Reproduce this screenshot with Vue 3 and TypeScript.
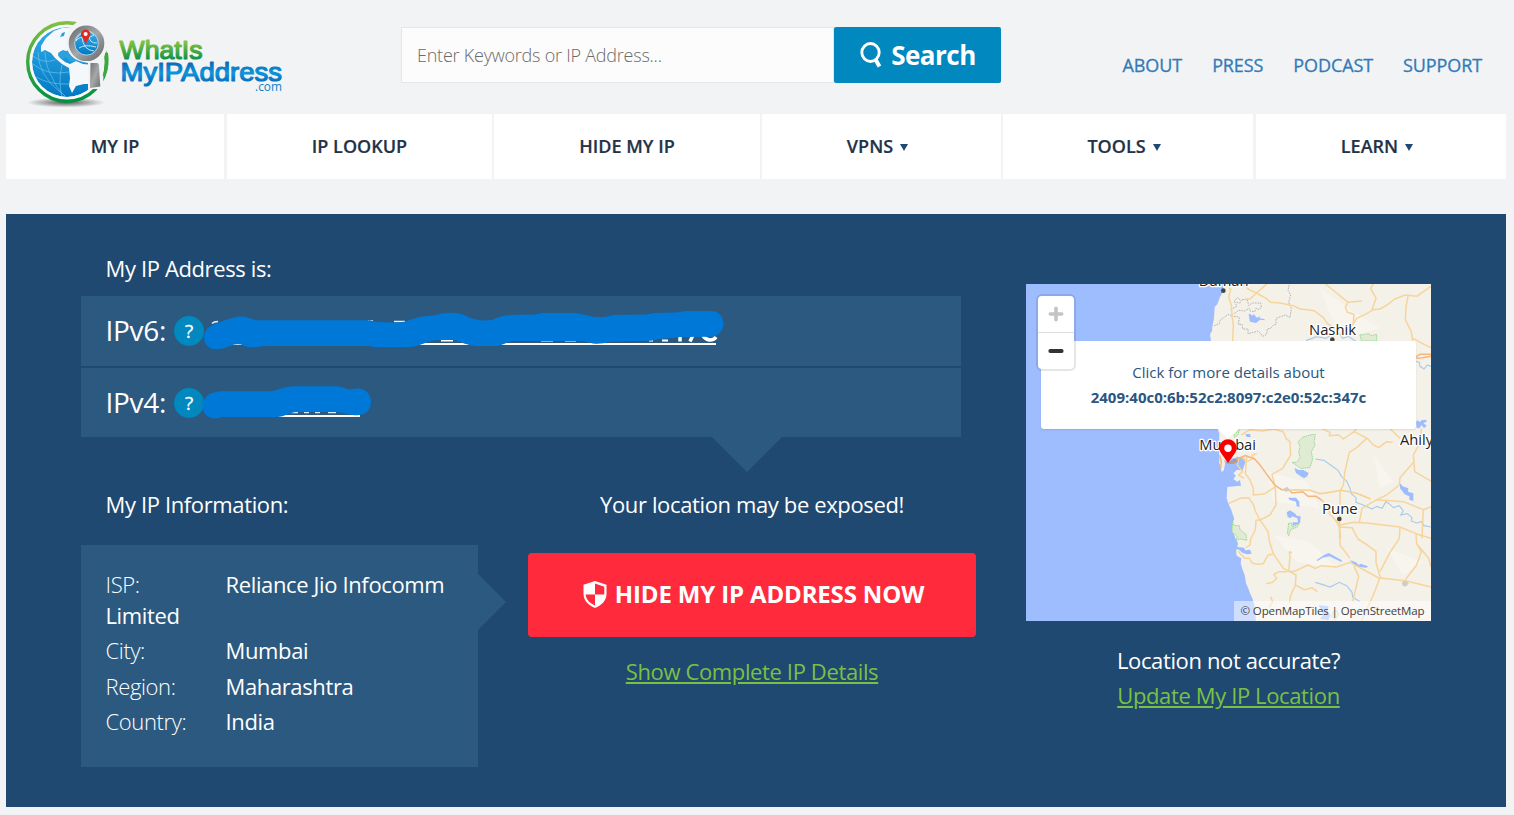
<script setup lang="ts">
const topLinks: string[] = ['ABOUT', 'PRESS', 'PODCAST', 'SUPPORT']

interface NavItem { label: string; menu: boolean; size: string }
const navItems: NavItem[] = [
  { label: 'MY IP', menu: false, size: 'n1' },
  { label: 'IP LOOKUP', menu: false, size: 'n2' },
  { label: 'HIDE MY IP', menu: false, size: 'n3' },
  { label: 'VPNS', menu: true, size: 'n4' },
  { label: 'TOOLS', menu: true, size: 'n5' },
  { label: 'LEARN', menu: true, size: 'n6' },
]

const info = [
  { label: 'ISP:', value: 'Reliance Jio Infocomm Limited' },
  { label: 'City:', value: 'Mumbai' },
  { label: 'Region:', value: 'Maharashtra' },
  { label: 'Country:', value: 'India' },
]
</script>

<template>
  <div class="page">
    <header class="header">
      <svg class="logo" viewBox="0 0 300 114" width="300" height="114">
        <defs>
          <linearGradient id="ring" x1="0" y1="0" x2="0" y2="1">
            <stop offset="0" stop-color="#7fbf3f" /><stop offset=".5" stop-color="#3fa640" /><stop offset="1" stop-color="#00923f" />
          </linearGradient>
          <linearGradient id="sea" x1="0" y1="0" x2="0" y2="1">
            <stop offset="0" stop-color="#35aee8" /><stop offset="1" stop-color="#0079c4" />
          </linearGradient>
          <linearGradient id="steel" x1="0" y1="0" x2="1" y2="1">
            <stop offset="0" stop-color="#707275" /><stop offset=".5" stop-color="#a5a7a9" /><stop offset="1" stop-color="#6d6f72" />
          </linearGradient>
          <linearGradient id="tgreen" x1="0" y1="0" x2="0" y2="1">
            <stop offset=".25" stop-color="#7fc241" /><stop offset=".8" stop-color="#159347" />
          </linearGradient>
          <linearGradient id="tblue" x1="0" y1="0" x2="0" y2="1">
            <stop offset=".2" stop-color="#0b68b3" /><stop offset=".55" stop-color="#0c95db" /><stop offset=".8" stop-color="#0873c0" />
          </linearGradient>
          <radialGradient id="shade"><stop offset="0" stop-color="#333" stop-opacity=".8" /><stop offset="1" stop-color="#333" stop-opacity="0" /></radialGradient>
          <clipPath id="globe"><circle cx="67" cy="62" r="35" /></clipPath>
        </defs>
        <ellipse cx="66" cy="102.500" rx="39" ry="5" fill="url(#shade)" />
        <circle cx="67" cy="62" r="40" fill="#f7f9fb" />
        <circle cx="67" cy="62" r="39.300" fill="none" stroke="url(#ring)" stroke-width="3.400" />
        <g clip-path="url(#globe)">
          <circle cx="67" cy="62" r="35" fill="url(#sea)" />
          <path d="M41 46 46 38 54 31 62 28 72 27 71 44 67 51 61 51 58 55 60 58 65 62 70 64 76 61 83 64 104 66 104 84 84 84 76 86 72 93 69 86 70 78 69 68 62 64 55 58 51 53 45 50 41 52Z" fill="#f4f8fb" />
          <path d="M62 33 65 32 64 36 60 37Z M58 53 63 50 66 51 70 56 80 60 84 63 76 61 70 62 66 57 63 59 59 57Z" fill="#2ba2df" />
          <path d="M38 52Q38 75 61 93M45 52Q46 68 52 77Q56 88 65 96M62 65Q58 81 62 97M33 64Q47 76 69 72M36 77Q50 85 69 84M33 56Q43 64 55 60" fill="none" stroke="#7cc9ef" stroke-width=".6" />
        </g>
        <path d="M77 22Q95 19 104.500 33 110 45 104 57L103 89H88V63Q66 60 66 42 67 28 77 22Z" fill="#f1f3f5" />
        <path d="M106.500 53Q108.500 65 104 76" fill="none" stroke="#3fa640" stroke-width="3" />
        <circle cx="86.500" cy="43.300" r="14.800" fill="#52b9ea" stroke="url(#steel)" stroke-width="6" />
        <circle cx="86.500" cy="43.300" r="11.800" fill="url(#sea)" stroke="#d5dde2" stroke-width=".8" />
        <path d="M76 41Q80 35 86 39L94 35Q91 30 86 32Q78 33 76 41M79 48Q85 44 96 47M82 37Q83 50 94 51M88 33Q89 44 97 43" fill="none" stroke="#c3e5f6" stroke-width="1" />
        <path d="M90.500 63H97Q98.800 63 99 66L100.300 86.500 90 88Z" fill="url(#steel)" />
        <path d="M86 43.500 82 37A4.600 4.600 0 1 1 89.300 37Z" fill="#e5281f" /><circle cx="85.600" cy="34" r="2" fill="#fff" />
        <g class="logo-text">
          <text x="119.500" y="58.500" textLength="83" lengthAdjust="spacingAndGlyphs" font-size="26" fill="url(#tgreen)" stroke="url(#tgreen)">WhatIs</text>
          <text x="120.500" y="80.500" textLength="161.500" lengthAdjust="spacingAndGlyphs" font-size="26" fill="url(#tblue)" stroke="url(#tblue)">MyIPAddress</text>
        </g>
        <text class="logo-com" x="255" y="91" textLength="27" lengthAdjust="spacingAndGlyphs" font-size="12" fill="#1183c6">.com</text>
      </svg>
      <form class="search" @submit.prevent>
        <input class="field" type="text" placeholder="Enter Keywords or IP Address..." />
        <button class="search-btn">
          <svg width="23" height="26" viewBox="0 0 23 26"><ellipse cx="10.500" cy="10.500" rx="8.700" ry="9" fill="none" stroke="#fff" stroke-width="2.900" /><path d="M15.500 17.500 19.500 24.500" stroke="#fff" stroke-width="4" /></svg>
          <span>Search</span>
        </button>
      </form>
      <div class="top-links"><a v-for="l in topLinks" :key="l">{{ l }}</a></div>
    </header>

    <nav class="nav">
      <a v-for="n in navItems" :key="n.label" :class="['nav-item', n.size]">
        <span>{{ n.label }}</span><i v-if="n.menu" class="caret"></i>
      </a>
    </nav>

    <main class="panel">
      <section class="left">
        <h2 class="heading ip-heading">My IP Address is:</h2>
        <div class="ips">
          <div class="ip-row v6">
            <span class="ip-label">IPv6:</span><span class="help">?</span>
            <svg class="scribble" viewBox="200 305 530 50" width="530" height="50">
              <path d="M212 323.500Q214 321.500 218 321.500M250 322H254M368 321H373M394 321.500H405" stroke="#e9f2fb" stroke-width="1.500" fill="none" />
              <path d="M225 344H716" stroke="#fff" stroke-width="2" />
              <path d="M441 340.500H453M541 340.500H553M565 340.500H576M649 340.500H653M662 340.500H668" stroke="#fff" stroke-width="2" />
              <path d="M680 336V341.500M693 335 690 341.500M703 336Q706 340 710 340T716 337" stroke="#fff" stroke-width="3.500" fill="none" />
              <path d="M204 337C204 328 213 324 222 321.500Q240 314 249 318 254 320.300 260 320.300H370Q374 322 379 322 397 323 406 321.500C412 319 417 317.500 423 316.500L436 315C446 312 458 312 465 315.500Q478 322 492 320 502 315 511 315L535 314.500 543 313H576L595 317H605L613 315 646 314.500 655 313 677 312.500C682 311.500 685 311 689 311H711C719 311 723 317 723.500 323.500 723.500 331 718 336.500 711 336.700L681 337 660 339 651 340.700 611 341.700Q600 344.500 593 343.500L583 341H513C507 342 502 346 494 346H478C466 346 461 341 453 340H436C425 342 417 347.300 407 347.300H375L369 346H264C256 347.500 248 348.500 241 344.500Q234 343.500 230 346C211 354 204 346 204 337Z" fill="#0078d7" />
            </svg>
          </div>
          <div class="ip-row v4">
            <span class="ip-label">IPv4:</span><span class="help">?</span>
            <svg class="scribble" viewBox="200 377 530 50" width="530" height="50">
              <path d="M272 416H360" stroke="#fff" stroke-width="2" />
              <path d="M291 412.500H298M304 412.500H309M315 412.500H320M328 412.500H336" stroke="#d8e9fb" stroke-width="1.500" />
              <path d="M202.500 406C202.500 396 212 391.300 222 391.300H272C280 389 286 386.300 295 386.200H337C343 387 347 390 352 389.300 366 386 371 395 371 402.300 371 410 365 415.300 357 415.300 349 415.300 343 412.500 336 412H295C289 413 284 416.500 278 417H222C212 421 202.500 416 202.500 406Z" fill="#0078d7" />
            </svg>
          </div>
        </div>
        <div class="lower">
          <div class="info">
            <h2 class="heading">My IP Information:</h2>
            <div class="info-box">
              <p v-for="r in info" :key="r.label"><span class="key">{{ r.label }}</span><span class="val">{{ r.value }}</span></p>
            </div>
          </div>
          <div class="cta">
            <h2 class="heading exposed">Your location may be exposed!</h2>
            <button class="hide-btn">
              <svg width="24" height="28" viewBox="0 0 24 28"><path d="M12 0 23.500 3.800V13C23.500 20 18 24.500 12 27C6 24.500.5 20 .5 13V3.800Z" fill="#fff" /><path d="M12 2.600 21.300 5.700V13.600H12ZM2.700 13.600H12V24.500C7 22.300 3.200 19 2.700 13.600Z" fill="#ff2a3b" /></svg>
              <span>HIDE MY IP ADDRESS NOW</span>
            </button>
            <a class="green">Show Complete IP Details</a>
          </div>
        </div>
      </section>

      <aside class="right">
        <div class="map">
          <svg class="tiles" width="405" height="337" viewBox="18 27 1215 1011">
            <rect x="18" y="27" width="1215" height="1011" fill="#f4f1e9" />
            <g fill="#faf8f3" opacity=".6"><path d="M900 40 1000 110 1080 160 960 190ZM740 590 860 620 900 700 760 680ZM760 780 870 800 950 880 830 860ZM1060 540 1120 620 1080 640ZM1100 820 1210 860 1150 900Z" /></g>
            <path d="M18 27H612L608 52 600 66 592 88 584 96 582 130 578 150 576 168 570 178 573 198 582 280 570 370 592 461 598 475 597 540 601 570 605 592 612 585 614 560 626 560 640 552 652 545 672 548 676 562 668 585 650 585 640 595 648 602 640 612 652 620 660 615 663 632 644 634 622 636 620 670 627 690 634 705 643 732 638 742 636 760 646 790 654 805 652 816 672 818 676 826 690 824 695 836 682 838 668 834 654 822 648 826 650 842 664 850 662 865 668 885 674 900 678 925 684 938 690 955 697 970 703 990 708 1038H18Z" fill="#9ebdff" />
            <path d="M597 565 601 545 612 540 618 552 612 580Z" fill="#f4efe6" />
            <g fill="#9ebdff">
              <path d="M686 118 692 116 694 122 702 118 710 128 722 124 718 130 732 132 736 136 720 134 708 144 690 140 688 132Z" />
              <path d="M1188 440 1194 436 1200 442 1204 436 1218 434 1220 440 1210 444 1220 452 1212 460 1205 450 1198 460 1190 458Z" />
              <path d="M823 579 836 585 850 585 866 594 862 604 852 610 842 604 828 594ZM805 668 828 668 838 680 838 696 830 694 828 680 808 674ZM800 712 810 706 826 716 830 722 842 724 840 745 818 752 818 742 834 742 832 730 816 724 812 730 803 726ZM1140 625 1148 634 1165 640 1164 650 1180 655 1180 678 1168 674 1168 664 1154 658 1140 640ZM890 855 912 840 926 834 966 856 964 861 928 844 908 848 892 858ZM990 855 1008 862 1016 870 1022 866 1044 874 1040 878 1018 876 1004 872ZM896 990 926 994 922 1012 932 1020 925 1036 900 1032 910 1018Z" />
              <path d="M676 478 690 476 692 486 680 486Z" />
            </g>
            <g fill="#dfebd3" stroke="#8ad78a" stroke-width="2.500" stroke-dasharray="5 2">
              <path d="M1020 180 1048 176 1052 182 1070 178 1070 198H1024Z" />
              <path d="M850 486 870 480 886 478 882 502 886 510 874 530 878 552 870 578 842 580 816 562 830 562 840 548 836 532 840 514 834 500Z" />
              <path d="M638 740 642 752 658 752 660 764 678 778 680 796 662 792 648 796 652 784 636 772ZM806 745 814 744 818 756 836 746 832 756 812 764 806 782 802 776Z" />
              <path d="M642 480 658 464 654 480 644 488ZM940 1010 950 1005 956 1020 944 1034 934 1024Z" />
            </g>
            <g fill="none" stroke="#b5b5b5" stroke-width="3" stroke-dasharray="5 3">
              <path d="M582 152 598 146 600 136 624 118 632 120 634 126 650 124 658 128 655 148 666 148 668 162 684 162 684 176 708 170 714 168 722 176 728 184 740 178 742 162 752 160 758 152 768 148 768 130 796 120 810 128 814 100 806 82 812 60 804 46 808 27" />
              <path d="M632 104 650 94 643 78 652 68 664 76 660 84 648 82M666 74 682 74 686 92 696 84 722 84 724 96 718 104 708 100 704 110 690 108 688 100 674 108 656 106 640 118" />
            </g>
            <g fill="none" stroke="#a9cbea" stroke-width="3.500">
              <path d="M858 197 890 185 918 190 936 178 960 178 968 190 985 184 1010 200" />
              <path d="M886 552 912 556 940 576 954 586 964 604 980 618 990 640 994 656 1008 668 1008 682 1030 690 1056 702 1070 694 1086 700 1098 680 1110 688 1120 698 1138 692 1150 708 1142 720 1162 716 1176 728 1174 738 1190 744 1204 740 1212 752 1233 756M886 922 906 928 930 936 958 922 980 932 996 952 998 966 1020 980M1180 256 1198 262 1200 274 1212 282 1222 270 1233 274" />
            </g>
            <g fill="none" stroke="#f7d49b" stroke-width="4.500" stroke-linejoin="round">
              <path d="M664 27 680 36 686 44 710 54 738 70 752 82 780 84 820 92 840 102 864 104 884 108 910 128 922 146 944 160 958 178 980 164 1000 146 1010 130 1040 116 1060 104 1080 102 1104 88 1124 72 1156 60 1190 64 1233 34" />
              <path d="M710 54 690 72 674 72M740 27 710 54M622 27 632 44 626 66 634 90 636 120 640 150 638 198M916 27 950 54 984 82 976 96 982 112 1002 118 1000 146M984 82 1026 78M1060 27 1052 40 1068 70 1056 104M1164 64 1158 96 1156 134 1174 170 1178 198M1180 190 1212 208 1233 218" />
              <path d="M664 480 690 464 728 468 760 462 790 470 798 490 810 500 812 540 788 580 756 598 766 638M905 461 930 472 928 482 956 480 970 492 1002 470 1010 461M1002 470 1042 490 1060 510 1076 518 1100 500 1118 502M1110 461 1140 490M1040 490 1010 518 988 532 974 594 970 630 960 650 960 728 958 750 962 790" />
              <path d="M1204 461 1202 500 1180 540 1182 560 1140 608 1138 630 1100 660 1070 674 1026 700 1018 742M1182 560 1184 590 1233 618M1070 674 1150 680 1210 704 1233 696M1210 704 1206 790" />
              <path d="M626 686 660 670 686 668 700 688 706 708 720 735 744 770 748 798 760 836 790 880 810 890 826 888 864 870 886 880 904 872 950 876 990 862 1012 874 1060 900 1074 908 1160 918 1233 936" />
              <path d="M680 545 676 595 690 615 700 640 700 660 735 656 768 634M720 735 750 720 768 690 766 638M664 545 680 560 700 550 696 540 710 536M656 550 652 570 668 590 656 600 672 610" />
              <path d="M720 735 708 736 706 765 692 792 690 810 678 818M654 828 674 850 688 850 696 864 712 868 730 866 744 840 758 838" />
              <path d="M802 890 776 890 762 898 770 910 758 922 738 926M816 834 808 830 810 846 806 888 828 900 826 932 812 960 808 985M826 930 852 944 876 938 892 950M752 965 758 980 748 998" />
              <path d="M926 715 946 735 962 750 1000 742 1040 744 1140 756 1188 776 1233 790M946 735 958 756 996 758 1014 792 1042 810 1068 830 1068 862 1080 904 1074 924 1060 960 1024 1038M958 756 960 810 990 850M1140 756 1138 790 1110 832 1080 890M1188 776 1190 806 1204 830 1190 870 1150 922M1190 806 1226 850 1233 876M1002 874 1016 904 998 980" />
            </g>
            <g fill="none" stroke="#f7b57d" stroke-width="4.500">
              <path d="M626 560 645 562 656 550 676 542 704 552 720 570 736 592 764 630 785 644 808 646 816 654 848 650 864 664 888 664 906 676" />
              <path d="M806 646 830 644 870 646 900 656 940 650 962 646 1008 654 1052 672M906 676 924 700 930 715" stroke="#f7cf91" />
              <path d="M599 540 604 558 602 580M1188 245 1200 238 1233 238M1188 250 1208 248 1233 244" />
            </g>
            <g stroke="#d0cdc9" fill="#d0cdc9"><path d="M1146 922 1152 918 1160 918 1166 926 1158 934 1148 932ZM790 642 802 636 810 646 798 650Z" /></g>
            <g fill="#444"><circle cx="610" cy="47" r="7" /><circle cx="937" cy="194" r="7" /><circle cx="958" cy="732" r="7" /></g>
            <g class="place">
              <text x="536" y="34" textLength="150" lengthAdjust="spacingAndGlyphs">Daman</text>
              <text x="867" y="179" textLength="141" lengthAdjust="spacingAndGlyphs">Nashik</text>
              <text x="538" y="524" textLength="170" lengthAdjust="spacingAndGlyphs">Mumbai</text>
              <text x="1140" y="511">Ahilya</text>
              <text x="906" y="716" textLength="107" lengthAdjust="spacingAndGlyphs">Pune</text>
            </g>
          </svg>
          <div class="popup"><span>Click for more details about</span><b>2409:40c0:6b:52c2:8097:c2e0:52c:347c</b></div>
          <svg class="pin" width="24" height="30" viewBox="0 0 24 30"><ellipse cx="15" cy="22" rx="7" ry="3" fill="#000" opacity=".15" /><path d="M12 24 5 14A8.700 8.700 0 1 1 19 14Z" fill="#f80000" /><circle cx="12" cy="9.300" r="3.700" fill="#fff" /></svg>
          <div class="zoom">
            <button><svg width="16" height="16" viewBox="0 0 16 16"><path d="M8 2.300V13.700M2.300 8H13.700" stroke="#c4c4c4" stroke-width="3.600" stroke-linecap="round" /></svg></button>
            <button><svg width="16" height="16" viewBox="0 0 16 16"><path d="M2.300 8H13.700" stroke="#333" stroke-width="3.800" stroke-linecap="round" /></svg></button>
          </div>
          <div class="credit">© OpenMapTiles | OpenStreetMap</div>
        </div>
        <p class="accurate">Location not accurate?</p>
        <a class="green">Update My IP Location</a>
      </aside>
    </main>
  </div>
</template>

<style>
html, body { margin: 0; background: #f1f3f5; overflow: hidden; }
</style>

<style scoped>
.page { width: 1514px; height: 815px; overflow: hidden; background: #f1f3f5; font-family: "Open Sans", "Noto Sans", sans-serif; color: #fff; box-sizing: border-box; }
.page * { box-sizing: border-box; }
.header { display: flex; height: 114px; align-items: flex-start; }
.logo { flex: none; margin-right: 101px; }
.logo-text { font-family: "Liberation Sans", Arial, sans-serif; font-weight: 400; stroke-width: 1.2px; stroke-linejoin: round; }
.logo-com { font-family: "Open Sans", sans-serif; }
.search { display: flex; margin-top: 27px; width: 600px; height: 56px; }
.field { flex: 1; min-width: 0; border: 1px solid #e4e6e7; background: #fcfcfc; padding: 0 15px; font: 300 18px "Open Sans", sans-serif; letter-spacing: -.23px; color: #777; outline: none; border-radius: 0; }
.field::placeholder { color: #6b6b6b; opacity: 1; }
.search-btn { width: 167px; border: 0; background: #0088bf; color: #fff; border-radius: 2px; display: flex; align-items: center; justify-content: center; gap: 8px; font: 700 26px "Open Sans", sans-serif; letter-spacing: -.5px; padding: 0 0 0 1px; }
.top-links { margin-left: auto; margin-right: 32px; display: flex; gap: 30px; padding-top: 53px; font-size: 18px; line-height: 24px; letter-spacing: -.1px; color: #337ab7; -webkit-text-stroke: .3px #337ab7; }
.nav { display: flex; gap: 2px; height: 65px; margin: 0 8px 0 6px; }
.nav-item { background: #fff; display: flex; align-items: center; justify-content: center; padding-bottom: 2px; font-weight: 600; font-size: 18px; color: #233247; -webkit-text-stroke: .2px #233247; flex: 0 0 auto; }
.n1 { width: 218px; margin-right: 1px; } .n2 { width: 265px; } .n3 { width: 266px; } .n4 { width: 239px; } .n5 { width: 250px; margin-right: 1px; } .n6 { width: 250px; }
.caret { border: 4px solid transparent; border-top: 7px solid #1f4971; border-bottom: 0; margin: 3px 8px 0 7px; }
.panel { margin: 35px 8px 0 6px; height: 593px; background: #1f4971; display: flex; padding: 0 75px; }
.left { width: 895px; }
.heading { margin: 0; font-weight: 400; font-size: 22px; line-height: 30px; padding-left: 24.500px; letter-spacing: -.37px; }
.ip-heading { padding-top: 39px; height: 82px; }
.ips { position: relative; width: 880px; display: flex; flex-direction: column; gap: 2px; }
.ips::after { content: ""; position: absolute; top: 141px; left: 631px; border: 35px solid transparent; border-top-color: #2c597f; border-bottom: 0; }
.ip-row { background: #2c597f; height: 70px; display: flex; align-items: center; position: relative; padding-left: 24.500px; }
.v4 { height: 69px; }
.ip-label { font-size: 28px; width: 68.500px; letter-spacing: -.3px; padding-bottom: 2px; }
.help { width: 30px; height: 30px; border-radius: 50%; background: #0088bf; text-align: center; font-size: 19px; line-height: 31px; font-weight: 400; -webkit-text-stroke: .3px #fff; }
.scribble { position: absolute; left: 119px; top: 9px; }
.lower { display: flex; gap: 50px; padding-top: 52px; }
.info { width: 397px; }
.info-box { position: relative; background: #2c597f; height: 222px; margin-top: 26px; padding: 24px 25px 0 24.500px; font-size: 22px; letter-spacing: -.37px; }
.info-box::after { content: ""; position: absolute; left: 397px; top: 29px; border: 28.500px solid transparent; border-left-color: #2c597f; border-right: 0; }
.info-box p { margin: 0 0 4.400px; line-height: 31px; }
.key { display: inline-block; width: 120px; font-weight: 300; }
.cta { width: 448px; text-align: center; }
.exposed { padding: 0; }
.hide-btn { width: 448px; height: 84px; margin: 34px 0 19px; border: 0; border-radius: 4px; background: #ff2a3b; color: #fff; display: flex; align-items: center; justify-content: center; gap: 8px; font: 700 24px "Open Sans", sans-serif; letter-spacing: -.15px; padding: 0 0 0 3px; }
.hide-btn span { padding-bottom: 3px; }
.green { color: #7ac143; text-decoration: underline; font-size: 22px; line-height: 30px; letter-spacing: -.37px; }
.right { margin-left: 50px; width: 405px; padding-top: 70px; text-align: center; font-size: 22px; flex: none; }
.map { position: relative; width: 405px; height: 337px; overflow: hidden; }
.tiles { display: block; }
.place { font: 44px "Open Sans", sans-serif; fill: #222; stroke: #fff; stroke-width: 8px; paint-order: stroke; stroke-linejoin: round; }
.popup { position: absolute; left: 15px; top: 57px; width: 375px; height: 88px; background: #fff; border-radius: 3px; color: #2a5680; font-size: 15px; line-height: 25px; display: flex; flex-direction: column; padding-top: 19px; box-shadow: 0 1px 2px rgba(0,0,0,.1); }
.popup::after { content: ""; position: absolute; left: 177px; top: 88px; border: 10px solid transparent; border-top-color: #fff; border-bottom: 0; }
.pin { position: absolute; left: 190px; top: 155px; }
.zoom { position: absolute; left: 12px; top: 12px; width: 36px; height: 73px; border-radius: 4px; background: #fff; box-shadow: 0 0 0 2px rgba(0,0,0,.1); }
.zoom button { display: flex; width: 36px; height: 36px; align-items: center; justify-content: center; border: 0; background: none; padding: 0; }
.zoom button + button { border-top: 1px solid #ddd; height: 37px; }
.credit { position: absolute; right: 0; bottom: 0; width: 197px; height: 20px; background: rgba(255,255,255,.5); color: #404040; font-size: 11.500px; letter-spacing: -.12px; line-height: 20px; white-space: nowrap; text-align: center; }
.accurate { margin: 24px 0 5px; line-height: 30px; letter-spacing: -.37px; }
</style>
